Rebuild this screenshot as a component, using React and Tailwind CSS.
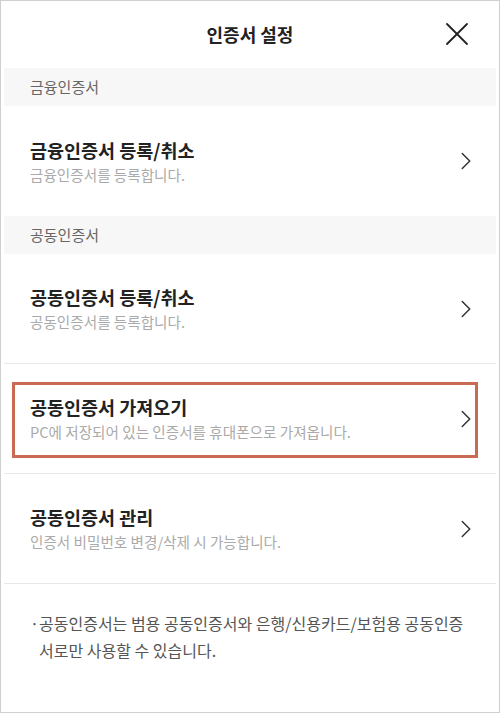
import { ChevronRight, X } from 'lucide-react';

const font = { fontFamily: '"Noto Sans CJK KR", "Noto Sans", sans-serif' };

function SectionLabel({ children }) {
  return (
    <div className="h-[38px] bg-[#f7f7f7] flex items-center pl-[26px] text-[15px] text-[#666]">
      {children}
    </div>
  );
}

function Item({ title, desc, highlight, last }) {
  return (
    <div className={`relative h-[110px] flex items-center pl-[26px] pr-[15px] ${last ? '' : 'border-b border-[#e8e8e8]'}`}>
      <div className="flex-1 flex flex-col gap-[1px]">
        <p className="text-[18.5px] leading-[25px] font-bold text-[#222]">{title}</p>
        <p className="text-[14.6px] leading-[21px] text-[#aaa]">{desc}</p>
      </div>
      <ChevronRight className="w-[30px] h-[30px] text-[#333]" strokeWidth={1.2} />
      {highlight && (
        <div className="absolute left-[8px] right-[18px] top-[18px] bottom-[15px] border-[3px] border-[#c96a55]" />
      )}
    </div>
  );
}

export default function App() {
  return (
    <div className="w-[500px] h-[713px] bg-white border border-[#cfcfcf] px-[3px] overflow-hidden" style={font}>
      {/* Header */}
      <div className="relative h-[67px] flex items-center justify-center">
        <h1 className="text-[18px] font-semibold text-[#222]">인증서 설정</h1>
        <X className="absolute right-[19px] top-[13px] w-[40px] h-[40px] text-[#222]" strokeWidth={1.1} />
      </div>

      <SectionLabel>금융인증서</SectionLabel>
      <Item title="금융인증서 등록/취소" desc="금융인증서를 등록합니다." last />

      <SectionLabel>공동인증서</SectionLabel>
      <Item title="공동인증서 등록/취소" desc="공동인증서를 등록합니다." />
      <Item title="공동인증서 가져오기" desc="PC에 저장되어 있는 인증서를 휴대폰으로 가져옵니다." highlight />
      <Item title="공동인증서 관리" desc="인증서 비밀번호 변경/삭제 시 가능합니다." />

      {/* Note */}
      <div className="flex pl-[26px] pr-[24px] pt-[26px] text-[16px] leading-[27px] text-[#555]">
        <span className="w-[9px] shrink-0">·</span>
        <p>공동인증서는 범용 공동인증서와 은행/신용카드/보험용 공동인증서로만 사용할 수 있습니다.</p>
      </div>
    </div>
  );
}
